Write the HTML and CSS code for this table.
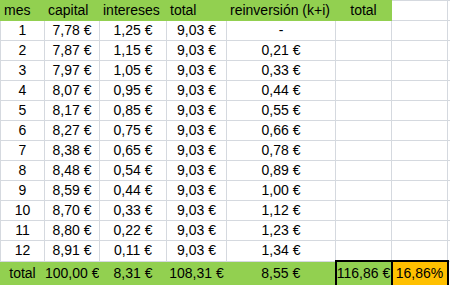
FILE: index.html
```html
<!DOCTYPE html>
<html lang="es">
<head>
    <meta charset="UTF-8">
    <title>Reinversión</title>
    <link rel="stylesheet" href="styles.css">
</head>
<body>

<table class="sheet">
    <colgroup>
        <col style="width:44px">
        <col style="width:55px">
        <col style="width:67px">
        <col style="width:60px">
        <col style="width:109px">
        <col style="width:56px">
        <col style="width:56px">
        <col style="width:20px">
    </colgroup>
    <tr class="head">
        <td class="left">mes</td>
        <td class="left">capital</td>
        <td class="left">intereses</td>
        <td class="left">total</td>
        <td class="left">reinversión (k+i)</td>
        <td>total</td>
        <td class="blank"></td>
        <td class="blank"></td>
    </tr>
    <tr><td>1</td><td>7,78 €</td><td>1,25 €</td><td>9,03 €</td><td>-</td><td></td><td></td><td></td></tr>
    <tr><td>2</td><td>7,87 €</td><td>1,15 €</td><td>9,03 €</td><td>0,21 €</td><td></td><td></td><td></td></tr>
    <tr><td>3</td><td>7,97 €</td><td>1,05 €</td><td>9,03 €</td><td>0,33 €</td><td></td><td></td><td></td></tr>
    <tr><td>4</td><td>8,07 €</td><td>0,95 €</td><td>9,03 €</td><td>0,44 €</td><td></td><td></td><td></td></tr>
    <tr><td>5</td><td>8,17 €</td><td>0,85 €</td><td>9,03 €</td><td>0,55 €</td><td></td><td></td><td></td></tr>
    <tr><td>6</td><td>8,27 €</td><td>0,75 €</td><td>9,03 €</td><td>0,66 €</td><td></td><td></td><td></td></tr>
    <tr><td>7</td><td>8,38 €</td><td>0,65 €</td><td>9,03 €</td><td>0,78 €</td><td></td><td></td><td></td></tr>
    <tr><td>8</td><td>8,48 €</td><td>0,54 €</td><td>9,03 €</td><td>0,89 €</td><td></td><td></td><td></td></tr>
    <tr><td>9</td><td>8,59 €</td><td>0,44 €</td><td>9,03 €</td><td>1,00 €</td><td></td><td></td><td></td></tr>
    <tr><td>10</td><td>8,70 €</td><td>0,33 €</td><td>9,03 €</td><td>1,12 €</td><td></td><td></td><td></td></tr>
    <tr><td>11</td><td>8,80 €</td><td>0,22 €</td><td>9,03 €</td><td>1,23 €</td><td></td><td></td><td></td></tr>
    <tr><td>12</td><td>8,91 €</td><td>0,11 €</td><td>9,03 €</td><td>1,34 €</td><td></td><td></td><td></td></tr>
    <tr class="foot">
        <td>total</td>
        <td>100,00 €</td>
        <td>8,31 €</td>
        <td>108,31 €</td>
        <td>8,55 €</td>
        <td class="boxed">116,86 €</td>
        <td class="boxed orange">16,86%</td>
        <td class="blank"></td>
    </tr>
</table>

</body>
</html>
```

FILE: styles.css
```css
body {
    margin: 0;
    background-color: #ffffff;
    font-family: 'Liberation Sans', Arial, sans-serif;
    font-size: 14px;
    color: #000;
}
.sheet {
    border-collapse: collapse;
    table-layout: fixed;
    width: 467px;
}
.sheet td {
    height: 19px;
    padding: 0;
    border: 1px solid #d5d9df;
    text-align: center;
    white-space: nowrap;
    overflow: hidden;
    line-height: 19px;
}
.sheet td.left {
    text-align: left;
    padding-left: 3px;
}
.head td {
    height: 20px;
    background-color: #92d050;
    border-color: #92d050;
    border-top: none;
}
.head td.blank {
    background-color: #fff;
    border-color: #d5d9df;
    box-shadow: inset 0 1px 0 #d5d9df; /* gridline of the row above */
}
.foot td {
    height: 23px;
    background-color: #92d050;
    border-color: #92d050;
}
.foot td.blank {
    background-color: #fff;
    border-color: #d5d9df;
}
.foot td.boxed {
    border: 2px solid #000;
}
.foot td.orange {
    background-color: #ffc000;
}
```
